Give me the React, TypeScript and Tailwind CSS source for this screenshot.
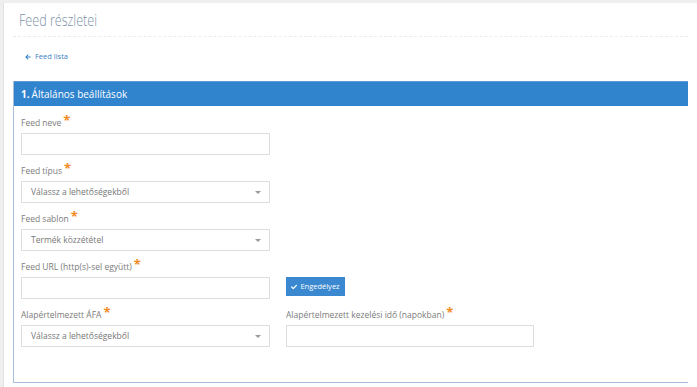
import { FaArrowLeft, FaCheck } from 'react-icons/fa';

function Label({ text }: { text: string }) {
  return (
    <div className="flex items-start h-[12px] text-[8.5px] text-[#7c7c7c] leading-[12px]">
      <span>{text}</span>
      <span className="ml-[2px] -mt-[3px] text-[#f08a24] text-[13px] leading-[13px] font-bold">*</span>
    </div>
  );
}

function TextInput() {
  return <div className="h-[22px] w-full border border-[#dcdcdc] bg-white" />;
}

function Select({ value }: { value: string }) {
  return (
    <div className="h-[22px] w-full border border-[#dcdcdc] bg-white flex items-center justify-between pl-[9px] pr-[8px]">
      <span className="text-[8.5px] text-[#777]">{value}</span>
      <span className="w-0 h-0 border-l-[3px] border-r-[3px] border-t-[3px] border-l-transparent border-r-transparent border-t-[#999]" />
    </div>
  );
}

function Field({ label, children }: { label: string; children: React.ReactNode }) {
  return (
    <div className="flex flex-col gap-[4px]">
      <Label text={label} />
      {children}
    </div>
  );
}

export default function App() {
  return (
    <div
      className="h-[387px] w-[697px] overflow-hidden bg-[#efefef] pt-[3px] pl-[3px]"
      style={{ fontFamily: '"Open Sans", "Liberation Sans", sans-serif' }}
    >
      <div className="h-full bg-white border-l border-[#e2e2e2] px-[9px]">
        <div className="h-[34px] pl-[6px] flex items-center border-b border-dashed border-[#ececec]">
          <h1 className="text-[17px] font-light text-[#7d93a8] origin-left scale-x-[0.74] whitespace-nowrap">
            Feed részletei
          </h1>
        </div>
        <div className="h-[44px] pl-[12px] pb-[4px] flex items-center">
          <a className="flex items-center gap-[4px] text-[7.5px] text-[#3b82c4]">
            <FaArrowLeft className="w-[6px] h-[6px] text-[#2d7fc6]" />
            Feed lista
          </a>
        </div>
        <div className="border-l border-b border-[#a9bdd8]">
          <div className="h-[25px] bg-[#3083cd] border-t border-[#5d9bd6] flex items-center pl-[7px] text-[10px] text-white">
            <span className="font-bold">1.</span>
            <span className="ml-[2px]">Általános beállítások</span>
          </div>
          <div className="pl-[7px] pt-[11px] pb-[35px] flex flex-col gap-[10px]">
            <div className="w-[249px]">
              <Field label="Feed neve">
                <TextInput />
              </Field>
            </div>
            <div className="w-[249px]">
              <Field label="Feed típus">
                <Select value="Válassz a lehetőségekből" />
              </Field>
            </div>
            <div className="w-[249px]">
              <Field label="Feed sablon">
                <Select value="Termék közzététel" />
              </Field>
            </div>
            <div className="flex gap-[16px] items-end">
              <div className="w-[249px]">
                <Field label="Feed URL (http(s)-sel együtt)">
                  <TextInput />
                </Field>
              </div>
              <button className="mb-[3px] h-[19px] w-[59px] bg-[#3a88d0] text-white text-[7.5px] flex items-center justify-center gap-[3px]">
                <FaCheck className="w-[6px] h-[6px]" />
                Engedélyez
              </button>
            </div>
            <div className="flex gap-[16px]">
              <div className="w-[249px]">
                <Field label="Alapértelmezett ÁFA">
                  <Select value="Válassz a lehetőségekből" />
                </Field>
              </div>
              <div className="w-[248px]">
                <Field label="Alapértelmezett kezelési idő (napokban)">
                  <TextInput />
                </Field>
              </div>
            </div>
          </div>
        </div>
      </div>
    </div>
  );
}
